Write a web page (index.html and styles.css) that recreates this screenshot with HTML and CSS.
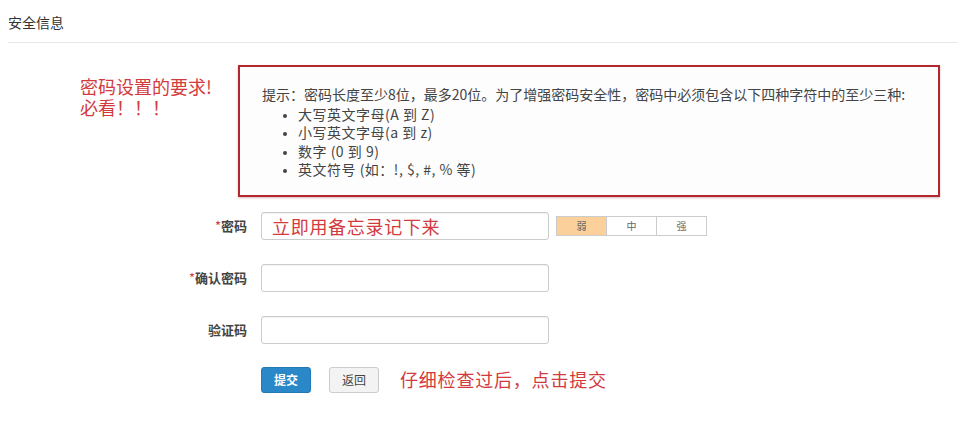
FILE: index.html
```html
<!DOCTYPE html>
<html lang="zh-CN">
<head>
  <meta charset="UTF-8">
  <meta name="viewport" content="width=device-width, initial-scale=1.0">
  <title>安全信息</title>
  <link rel="stylesheet" href="styles.css">
</head>
<body>
  <div class="page">
    <!-- Section title -->
    <div class="section-title">安全信息</div>

    <!-- Password rules -->
    <div class="tip-row">
      <div class="note side-note">
        <div>密码设置的要求!</div>
        <div>必看！！！</div>
      </div>
      <div class="tip-box">
        <p>提示：密码长度至少8位，最多20位。为了增强密码安全性，密码中必须包含以下四种字符中的至少三种:</p>
        <ul>
          <li>大写英文字母(A 到 Z)</li>
          <li>小写英文字母(a 到 z)</li>
          <li>数字 (0 到 9)</li>
          <li>英文符号 (如：!, $, #, % 等)</li>
        </ul>
      </div>
    </div>

    <!-- Form -->
    <form class="form">
      <div class="form-row">
        <label class="form-label" for="pwd"><span class="req">*</span>密码</label>
        <input class="form-input red-text" type="text" id="pwd" value="立即用备忘录记下来">
        <div class="strength">
          <span class="level active">弱</span>
          <span class="level">中</span>
          <span class="level">强</span>
        </div>
      </div>

      <div class="form-row">
        <label class="form-label" for="pwd2"><span class="req">*</span>确认密码</label>
        <input class="form-input" type="password" id="pwd2">
      </div>

      <div class="form-row">
        <label class="form-label" for="code">验证码</label>
        <input class="form-input" type="text" id="code">
      </div>

      <div class="form-row actions">
        <span class="form-label"></span>
        <button type="button" class="btn btn-primary">提交</button>
        <button type="button" class="btn">返回</button>
        <span class="note inline">仔细检查过后，点击提交</span>
      </div>
    </form>
  </div>
</body>
</html>
```

FILE: styles.css
```css
/* General */
body {
  margin: 0;
  background: #fff;
  font-family: "Noto Sans CJK SC", "Liberation Sans", sans-serif;
  color: #333;
}

.page {
  padding: 0 9px 0 8px;
}

/* Title bar */
.section-title {
  padding: 12px 0 10px;
  font-size: 14px;
  line-height: 20px;
  color: #333;
  border-bottom: 1px solid #e6e6e6;
}

/* Red notes */
.note {
  color: #d23a3e;
  font-size: 18px;
  line-height: 21px;
}

/* Tip row */
.tip-row {
  display: flex;
  margin-top: 22px;
}

.side-note {
  width: 230px;
  box-sizing: border-box;
  padding: 11px 0 0 72px;
  display: flex;
  flex-direction: column;
  gap: 1px;
  line-height: 20px;
}

.tip-box {
  width: 702px;
  box-sizing: border-box;
  border: 2px solid #b3282e;
  box-shadow: 0 1px 2px rgba(120, 30, 30, 0.3);
  background: #fdfdfd;
  padding: 18px 22px 16px;
  font-size: 14px;
  line-height: 18.5px;
  color: #444;
}

.tip-box p {
  margin: 0 0 1px;
  white-space: nowrap;
}

.tip-box ul {
  margin: 0;
  padding-left: 36px;
}

.tip-box li {
  letter-spacing: 0.5px;
}

.tip-box li::marker {
  font-size: 11px;
}

/* Form */
.form {
  margin-top: 15px;
}

.form-row {
  display: flex;
  align-items: center;
  margin-bottom: 24px;
}

.form-label {
  width: 239px;
  margin-right: 14px;
  text-align: right;
  font-size: 13px;
  font-weight: bold;
  color: #444;
  flex-shrink: 0;
}

.req {
  color: #d23a3e;
  font-weight: normal;
}

.form-input {
  width: 288px;
  height: 28px;
  box-sizing: border-box;
  border: 1px solid #ccc;
  border-radius: 3px;
  box-shadow: inset 0 1px 1px rgba(0, 0, 0, 0.06);
  padding: 0 10px;
  font-family: inherit;
  font-size: 14px;
  background: #fff;
}

.red-text {
  color: #d23a3e;
  font-size: 18px;
  letter-spacing: 0.7px;
}

/* Strength meter */
.strength {
  display: flex;
  margin-left: 7px;
  border: 1px solid #ccc;
  height: 20px;
  box-sizing: border-box;
}

.level {
  width: 49px;
  text-align: center;
  font-size: 10px;
  line-height: 18px;
  color: #666;
  border-left: 1px solid #ccc;
  background: #fff;
}

.level:first-child {
  border-left: none;
}

.level.active {
  background: #fbd09a;
}

/* Buttons */
.actions {
  margin-top: -1px;
}

.btn {
  width: 50px;
  height: 26px;
  margin-right: 18px;
  border: 1px solid #ccc;
  border-radius: 3px;
  background: #f3f3f3;
  font-family: inherit;
  font-size: 12px;
  color: #444;
  padding: 0;
}

.btn-primary {
  background: #2a88c8;
  border-color: #2379b4;
  color: #fff;
  font-weight: bold;
}

.note.inline {
  margin-left: 3px;
  letter-spacing: 0.8px;
}
```
